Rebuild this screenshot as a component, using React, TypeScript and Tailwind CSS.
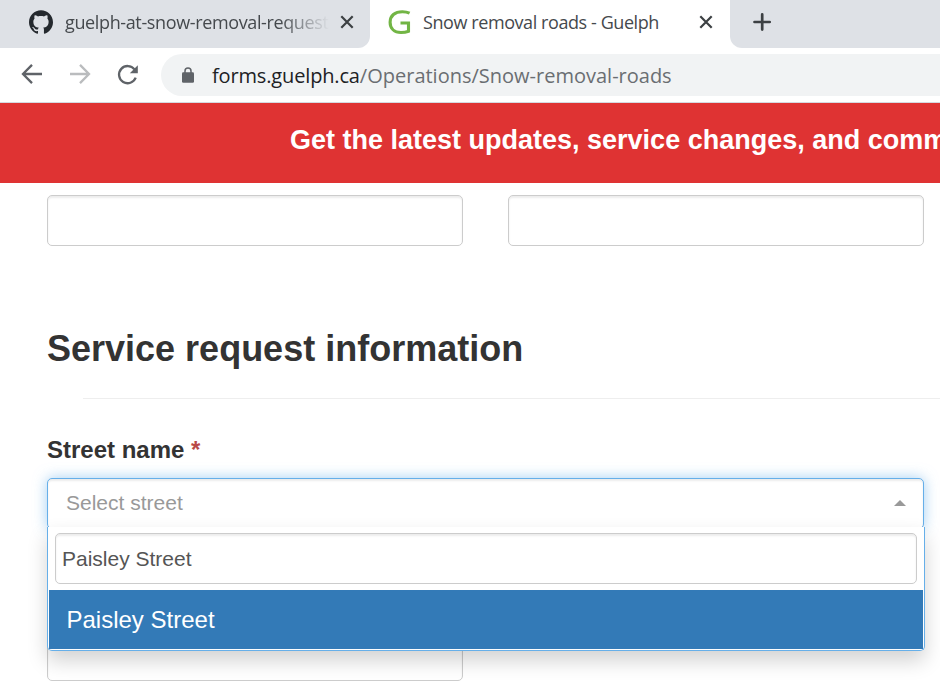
import { SiGithub } from "react-icons/si";

const inputBox =
  "h-[51px] rounded-[5px] border border-[#ccc] bg-white shadow-[inset_0_2px_2px_rgba(0,0,0,0.075)]";

function CloseIcon() {
  return (
    <svg width="14" height="14" viewBox="0 0 14 14" className="shrink-0" stroke="#3c4043" strokeWidth="2.2">
      <path d="M1.300 1.300 12.700 12.700M12.700 1.300 1.300 12.700" />
    </svg>
  );
}

function TabStrip() {
  return (
    <div className="flex h-12 bg-white text-[18px] text-[#45494d]">
      <div className="flex h-12 w-[370px] shrink-0 items-center overflow-hidden rounded-br-[12px] bg-[#dee1e6] pb-1 pl-[29px]">
        <SiGithub size={24} color="#24292e" className="shrink-0" />
        <div className="ml-3 w-[264px] shrink-0 whitespace-nowrap [mask-image:linear-gradient(to_right,black_215px,transparent_264px)]">
          <span className="tracking-[-0.37px]">guelph-at-snow-removal-request</span>
        </div>
        <div className="ml-[11px] flex">
          <CloseIcon />
        </div>
      </div>
      <div className="flex h-12 w-[360px] shrink-0 items-center rounded-tr-[8px] bg-white pb-1 pl-[18px]">
        <svg width="24" height="26" viewBox="0 0 24 26" className="shrink-0" fill="none" stroke="#72b545" strokeWidth="3.1">
          <path d="M21.600 4.200C19.500 3.200 17.200 2.700 14.400 2.700 6.800 2.700 2.100 6.800 2.100 13.200c0 6.300 4.200 10.300 10.900 10.300 2.900 0 5.300-.4 7.500-1.300v-8.200h-8" />
        </svg>
        <span className="ml-[11px] w-[240px] tracking-[-0.42px] whitespace-nowrap">Snow removal roads - Guelph</span>
        <div className="ml-[36px] flex">
          <CloseIcon />
        </div>
      </div>
      <div className="flex h-12 flex-1 items-center rounded-bl-[12px] bg-[#dee1e6] pb-1 pl-[22px]">
        <svg width="20" height="20" viewBox="0 0 20 20" stroke="#3c4043" strokeWidth="2.7" strokeLinecap="round">
          <path d="M2.500 10H17.700M10.200 2.400V17.600" />
        </svg>
      </div>
    </div>
  );
}

function Toolbar() {
  return (
    <div className="flex h-[55px] items-center border-b border-[#d5dae0] bg-white pl-[21px]">
      <svg width="22" height="22" viewBox="0 0 22 22" fill="none" stroke="#5f6368" strokeWidth="2.3" className="mb-[2px]">
        <path d="M21 11H2.500M11 1.900 2 11l9 9.100" />
      </svg>
      <svg width="22" height="22" viewBox="0 0 22 22" fill="none" stroke="#babcbe" strokeWidth="2.3" className="mb-[2px] ml-[26px]">
        <path d="M1 11h18.500M11 1.900 20 11l-9 9.100" />
      </svg>
      <svg width="22" height="22" viewBox="0 0 22 22" fill="none" stroke="#5f6368" strokeWidth="2.3" className="mb-[1px] ml-[26px]">
        <path d="M18.700 13.700A8.600 8.600 0 1 1 17.500 5.400" />
        <path d="M20.800 1.300v8h-8z" fill="#5f6368" stroke="none" />
      </svg>
      <div className="ml-[22px] flex h-[42px] flex-1 items-center rounded-l-full bg-[#f1f3f4] pl-[21px]">
        <svg width="12" height="16" viewBox="0 0 12 16" fill="none" className="shrink-0">
          <rect y="5.300" width="12" height="10.400" rx="1.300" fill="#5f6368" />
          <path d="M3 6V3.900a3 3 0 0 1 6 0V6" stroke="#5f6368" strokeWidth="1.500" />
        </svg>
        <span className="mt-[2px] ml-[18px] text-[20px] whitespace-nowrap text-[#6a6e72]">
          <span className="tracking-[-0.15px] text-[#202124]">forms.guelph.ca</span>/Operations/Snow-removal-roads
        </span>
      </div>
    </div>
  );
}

function StreetSelect() {
  return (
    <div className="relative h-[51px] w-[877px]">
      <div className="flex h-[51px] items-center justify-between rounded-[5px] border border-[#66afe9] bg-white pr-[17px] pb-[2px] pl-[19px] shadow-[inset_0_2px_2px_rgba(0,0,0,0.075),0_0_14px_rgba(102,175,233,0.6)]">
        <span className="-ml-px text-[21px] text-[#999]">Select street</span>
        <span className="h-0 w-0 border-x-[6px] border-b-[6px] border-x-transparent border-b-[#999]" />
      </div>
      <div className="absolute top-[49px] left-0 h-[124px] w-[878px] rounded-b-[5px] border border-t-0 border-[#66afe9] bg-white px-[1px] pt-[6px] shadow-[0_10px_20px_rgba(0,0,0,0.175)]">
        <div className="mx-[6px] flex h-[51px] items-center rounded-[5px] border border-[#ccc] pl-[6px] text-[21px] text-[#555] shadow-[inset_0_2px_2px_rgba(0,0,0,0.075)]">
          Paisley Street
        </div>
        <div className="mt-[6px] flex h-[59px] items-center bg-[#337ab7] pl-[17.500px] text-[24px] text-white">
          Paisley Street
        </div>
      </div>
    </div>
  );
}

export default function App() {
  return (
    <div className="h-[689px] w-[940px] overflow-hidden bg-white">
      <header className="font-['Open_Sans','Noto_Sans',sans-serif]">
        <TabStrip />
        <Toolbar />
      </header>
      <main className="font-['Liberation_Sans',Arial,sans-serif] text-[#333]">
        <div className="h-20 overflow-hidden bg-[#df3333] pt-5 pl-[290px] text-[27px] leading-[34px] font-bold whitespace-nowrap text-white">
          Get the latest updates, service changes, and community
        </div>
        <div className="pt-3 pl-[47px]">
          <div className="flex gap-[45px]">
            <div className={`${inputBox} w-[416px]`} />
            <div className={`${inputBox} w-[416px]`} />
          </div>
          <h2 className="mt-[83px] text-[36px] leading-[40px] font-bold whitespace-nowrap">
            Service request information
          </h2>
          <div className="mt-[29px] ml-9 h-px bg-[#eee]" />
          <div className="mt-[35px] h-[44px] text-[24px] leading-[32px] font-bold">
            Street name <span className="text-[#b94a48]">*</span>
          </div>
          <StreetSelect />
          <div className={`${inputBox} mt-[101px] w-[416px]`} />
        </div>
      </main>
    </div>
  );
}
